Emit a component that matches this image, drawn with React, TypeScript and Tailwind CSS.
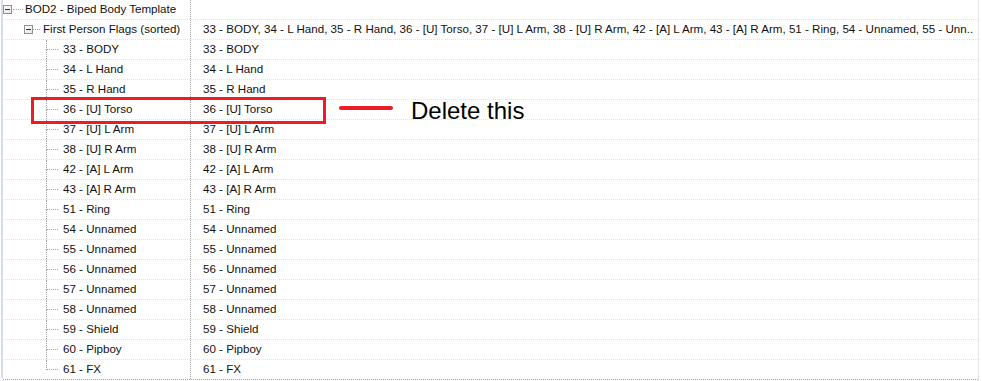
import React from 'react'

const items = [
  '33 - BODY',
  '34 - L Hand',
  '35 - R Hand',
  '36 - [U] Torso',
  '37 - [U] L Arm',
  '38 - [U] R Arm',
  '42 - [A] L Arm',
  '43 - [A] R Arm',
  '51 - Ring',
  '54 - Unnamed',
  '55 - Unnamed',
  '56 - Unnamed',
  '57 - Unnamed',
  '58 - Unnamed',
  '59 - Shield',
  '60 - Pipboy',
  '61 - FX',
]

const summary =
  '33 - BODY, 34 - L Hand, 35 - R Hand, 36 - [U] Torso, 37 - [U] L Arm, 38 - [U] R Arm, 42 - [A] L Arm, 43 - [A] R Arm, 51 - Ring, 54 - Unnamed, 55 - Unn..'

const Expander = () => (
  <div className="w-[9px] h-[9px] border border-[#919191] bg-gradient-to-br from-white to-[#e4e4e4] flex items-center justify-center shrink-0">
    <div className="w-[5px] h-[1px] bg-[#333]" />
  </div>
)

const Row = ({ left, right, last }: { left: React.ReactNode; right: React.ReactNode; last?: boolean }) => (
  <div className={`flex h-[20px] border-b border-dotted ${last ? 'border-[#a0a0a0]' : 'border-[#e3e3e3]'}`}>
    <div className="w-[188px] shrink-0 flex items-stretch border-r border-dotted border-[#a0a0a0]">{left}</div>
    <div className="flex-1 min-w-0 pl-[12px] flex items-center overflow-hidden whitespace-nowrap pb-[1px]">{right}</div>
  </div>
)

export default function App() {
  return (
    <div className="w-[982px] h-[381px] bg-white relative overflow-hidden font-['Liberation_Sans',sans-serif] text-[11.6px] text-[#111]">
      <div className="flex h-full">
        <div className="w-[1px]" />
        <div className="w-[2px] h-[378px] bg-[#d6dce9]" />
        <div className="w-[976px] border-r border-[#e6e6e6] flex flex-col">
          <Row
            left={
              <div className="flex items-center pb-[1px]">
                <Expander />
                <div className="w-[10px] ml-[1px] border-b border-dotted border-[#a0a0a0]" />
                <span className="ml-[2px] whitespace-nowrap">BOD2 - Biped Body Template</span>
              </div>
            }
            right={null}
          />
          <Row
            left={
              <div className="flex items-center pl-[21px] pb-[1px]">
                <Expander />
                <div className="w-[7px] border-b border-dotted border-[#a0a0a0]" />
                <span className="ml-[3px] whitespace-nowrap">First Person Flags (sorted)</span>
              </div>
            }
            right={summary}
          />
          {items.map((item, i) => {
            const last = i === items.length - 1
            return (
              <Row
                key={item}
                last={last}
                left={
                  <div className="flex pl-[43px] h-full">
                    <div className="w-[12px] flex flex-col">
                      <div className="h-[10px] border-l border-b border-dotted border-[#a0a0a0]" />
                      {!last && <div className="flex-1 border-l border-dotted border-[#a0a0a0]" />}
                    </div>
                    <span className="ml-[5px] self-center whitespace-nowrap pb-[1px]">{item}</span>
                  </div>
                }
                right={item}
              />
            )
          })}
        </div>
      </div>

      {/* annotation */}
      <div className="absolute left-[31px] top-[97px] w-[295px] h-[27px] border-[3px] border-[#ed1c24]" />
      <div className="absolute left-[339px] top-[106px] w-[54px] h-[4px] rounded-full bg-[#ed1c24]" />
      <div className="absolute left-[411px] top-[96px] text-[24px] leading-[30px] font-['Liberation_Sans',sans-serif] text-black">
        Delete this
      </div>
    </div>
  )
}
